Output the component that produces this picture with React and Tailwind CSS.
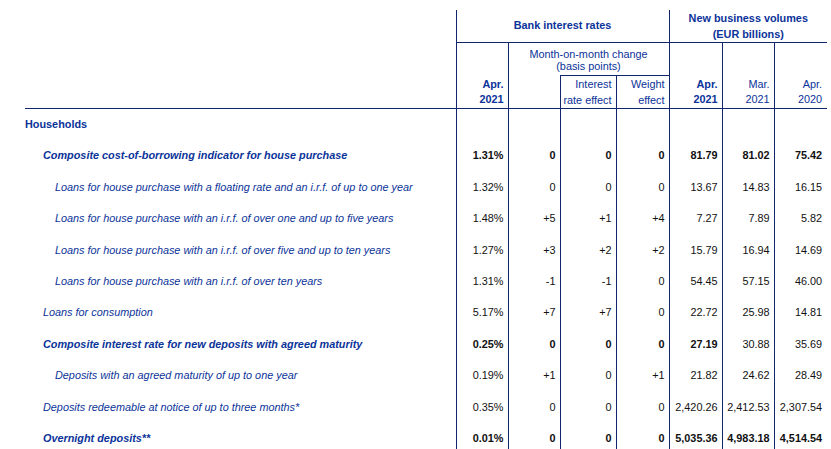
const rows = [
  { label: "Households", level: 0, bold: true, italic: false, values: null },
  { label: "Composite cost-of-borrowing indicator for house purchase", level: 1, bold: true, italic: true,
    values: ["1.31%", "0", "0", "0", "81.79", "81.02", "75.42"], boldCols: [0, 1, 2, 3, 4, 5, 6] },
  { label: "Loans for house purchase with a floating rate and an i.r.f. of up to one year", level: 2, italic: true,
    values: ["1.32%", "0", "0", "0", "13.67", "14.83", "16.15"] },
  { label: "Loans for house purchase with an i.r.f. of over one and up to five years", level: 2, italic: true,
    values: ["1.48%", "+5", "+1", "+4", "7.27", "7.89", "5.82"] },
  { label: "Loans for house purchase with an i.r.f. of over five and up to ten years", level: 2, italic: true,
    values: ["1.27%", "+3", "+2", "+2", "15.79", "16.94", "14.69"] },
  { label: "Loans for house purchase with an i.r.f. of over ten years", level: 2, italic: true,
    values: ["1.31%", "-1", "-1", "0", "54.45", "57.15", "46.00"] },
  { label: "Loans for consumption", level: 1, italic: true,
    values: ["5.17%", "+7", "+7", "0", "22.72", "25.98", "14.81"] },
  { label: "Composite interest rate for new deposits with agreed maturity", level: 1, bold: true, italic: true,
    values: ["0.25%", "0", "0", "0", "27.19", "30.88", "35.69"], boldCols: [0, 1, 2, 3, 4] },
  { label: "Deposits with an agreed maturity of up to one year", level: 2, italic: true,
    values: ["0.19%", "+1", "0", "+1", "21.82", "24.62", "28.49"] },
  { label: "Deposits redeemable at notice of up to three months*", level: 1, italic: true,
    values: ["0.35%", "0", "0", "0", "2,420.26", "2,412.53", "2,307.54"] },
  { label: "Overnight deposits**", level: 1, bold: true, italic: true,
    values: ["0.01%", "0", "0", "0", "5,035.36", "4,983.18", "4,514.54"], boldCols: [0, 1, 2, 3, 4, 5, 6] },
];

const indent = ["pl-0", "pl-[18px]", "pl-[30px]"];
const line = "border-[#10286b]";

export default function App() {
  return (
    <div className="bg-white w-[831px] h-[449px] overflow-hidden pt-[10px] pl-[25px] font-['Liberation_Sans',Arial,sans-serif] text-[10.85px] text-[#0b3399]">
      <table className="table-fixed border-collapse w-[802px]">
        <colgroup>
          <col className="w-[431px]" />
          <col className="w-[52px]" />
          <col className="w-[52px]" />
          <col className="w-[56px]" />
          <col className="w-[53px]" />
          <col className="w-[53px]" />
          <col className="w-[52px]" />
          <col className="w-[53px]" />
        </colgroup>
        <thead>
          <tr className="h-[31px]">
            <th rowSpan={3} className={`border-b ${line} p-0`}></th>
            <th colSpan={4} className={`border-l border-b ${line} font-bold text-center leading-[15px] p-0 pb-[2px]`}>
              Bank interest rates
            </th>
            <th colSpan={3} className={`border-l border-b ${line} font-bold text-center leading-[16px] p-0`}>
              New business volumes
              <br />
              (EUR billions)
            </th>
          </tr>
          <tr className="h-[33px]">
            <th rowSpan={2} className={`border-l border-b ${line} font-bold text-right align-bottom leading-[15px] p-0 pr-[4px] pb-[1px]`}>
              Apr.
              <br />
              2021
            </th>
            <th colSpan={3} className={`border-l ${line} font-normal text-center align-middle leading-[12px] p-0 pt-[1px]`}>
              Month-on-month change
              <br />
              (basis points)
            </th>
            <th rowSpan={2} className={`border-l border-b ${line} font-bold text-right align-bottom leading-[15px] p-0 pr-[4px] pb-[1px]`}>
              Apr.
              <br />
              2021
            </th>
            <th rowSpan={2} className={`border-l border-b ${line} font-normal text-right align-bottom leading-[15px] p-0 pr-[4px] pb-[1px]`}>
              Mar.
              <br />
              2021
            </th>
            <th rowSpan={2} className={`border-l border-b ${line} font-normal text-right align-bottom leading-[15px] p-0 pr-[5px] pb-[1px]`}>
              Apr.
              <br />
              2020
            </th>
          </tr>
          <tr className="h-[32px]">
            <th className={`border-l border-b ${line} p-0`}></th>
            <th className={`border-l border-t border-b ${line} font-normal text-right align-bottom leading-[16px] p-0 pr-[4px]`}>
              Interest
              <br />
              rate effect
            </th>
            <th className={`border-l border-t border-b ${line} font-normal text-right align-bottom leading-[16px] p-0 pr-[4px]`}>
              Weight
              <br />
              effect
            </th>
          </tr>
        </thead>
        <tbody>
          {rows.map((r, i) => (
            <tr key={i} className="h-[31.4px]">
              <td
                className={`p-0 whitespace-nowrap ${indent[r.level]} ${r.bold ? "font-bold" : "font-normal"} ${r.italic ? "italic" : ""}`}
              >
                {r.label}
              </td>
              {Array.from({ length: 7 }).map((_, j) => {
                const v = r.values ? r.values[j] : "";
                const b = r.boldCols && r.boldCols.includes(j);
                return (
                  <td
                    key={j}
                    className={`border-l ${line} p-0 ${j === 6 ? "pr-[5px]" : "pr-[4px]"} text-right text-[#111] ${b ? "font-bold" : "font-normal"}`}
                  >
                    {v}
                  </td>
                );
              })}
            </tr>
          ))}
        </tbody>
      </table>
    </div>
  );
}
